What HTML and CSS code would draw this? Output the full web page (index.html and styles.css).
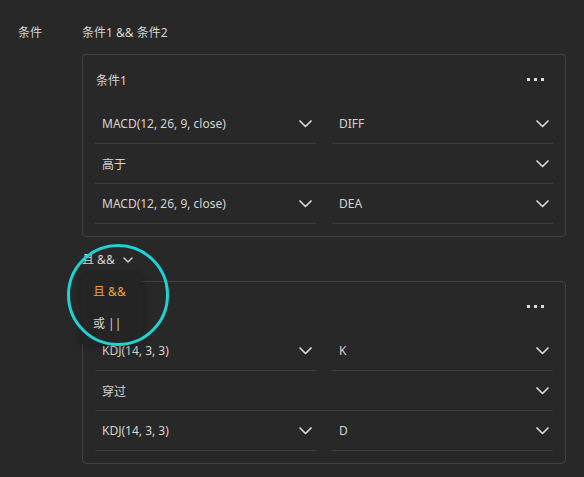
FILE: index.html
```html
<!DOCTYPE html>
<html lang="zh-CN">
<head>
<meta charset="utf-8">
<link rel="stylesheet" href="styles.css">
</head>
<body>
<div class="form-row">
  <div class="label">条件</div>
  <div class="content">
    <div class="summary">条件1 &amp;&amp; 条件2</div>

    <div class="card">
      <div class="card-head">
        <span>条件1</span>
        <svg class="more" width="18" height="4" viewBox="0 0 18 4"><rect x="0" y="0" width="3" height="3"/><rect x="7" y="0" width="3" height="3"/><rect x="14" y="0" width="3" height="3"/></svg>
      </div>
      <div class="row">
        <div class="select"><span>MACD(12, 26, 9, close)</span><svg class="chev" width="13" height="8" viewBox="0 0 13 8"><polyline points="1,1 6.5,6.5 12,1"/></svg></div>
        <div class="select"><span>DIFF</span><svg class="chev" width="13" height="8" viewBox="0 0 13 8"><polyline points="1,1 6.5,6.5 12,1"/></svg></div>
      </div>
      <div class="row single">
        <div class="select"><span>高于</span><svg class="chev" width="13" height="8" viewBox="0 0 13 8"><polyline points="1,1 6.5,6.5 12,1"/></svg></div>
      </div>
      <div class="row">
        <div class="select"><span>MACD(12, 26, 9, close)</span><svg class="chev" width="13" height="8" viewBox="0 0 13 8"><polyline points="1,1 6.5,6.5 12,1"/></svg></div>
        <div class="select"><span>DEA</span><svg class="chev" width="13" height="8" viewBox="0 0 13 8"><polyline points="1,1 6.5,6.5 12,1"/></svg></div>
      </div>
    </div>

    <div class="logic">
      <div class="logic-trigger">且 &amp;&amp;<svg class="chev-sm" width="10" height="6" viewBox="0 0 10 6"><polyline points="1,1 5,5 9,1"/></svg></div>
      <div class="menu">
        <div class="menu-item active">且 &amp;&amp;</div>
        <div class="menu-item">或 ||</div>
      </div>
    </div>

    <div class="card">
      <div class="card-head">
        <span class="covered">条件2</span>
        <svg class="more" width="18" height="4" viewBox="0 0 18 4"><rect x="0" y="0" width="3" height="3"/><rect x="7" y="0" width="3" height="3"/><rect x="14" y="0" width="3" height="3"/></svg>
      </div>
      <div class="row">
        <div class="select"><span>KDJ(14, 3, 3)</span><svg class="chev" width="13" height="8" viewBox="0 0 13 8"><polyline points="1,1 6.5,6.5 12,1"/></svg></div>
        <div class="select"><span>K</span><svg class="chev" width="13" height="8" viewBox="0 0 13 8"><polyline points="1,1 6.5,6.5 12,1"/></svg></div>
      </div>
      <div class="row single">
        <div class="select"><span>穿过</span><svg class="chev" width="13" height="8" viewBox="0 0 13 8"><polyline points="1,1 6.5,6.5 12,1"/></svg></div>
      </div>
      <div class="row">
        <div class="select"><span>KDJ(14, 3, 3)</span><svg class="chev" width="13" height="8" viewBox="0 0 13 8"><polyline points="1,1 6.5,6.5 12,1"/></svg></div>
        <div class="select"><span>D</span><svg class="chev" width="13" height="8" viewBox="0 0 13 8"><polyline points="1,1 6.5,6.5 12,1"/></svg></div>
      </div>
    </div>
  </div>
</div>
<div class="highlight"></div>
</body>
</html>
```

FILE: styles.css
```css
html, body {
  margin: 0;
  padding: 0;
  background: #282828;
  height: 100%;
}
body {
  font-family: "Noto Sans", "Noto Sans CJK SC", sans-serif;
  font-size: 12px;
  color: #d4d4d4;
  position: relative;
  overflow: hidden;
}
.form-row {
  display: grid;
  grid-template-columns: 64px 1fr;
  padding: 24px 18px 0 18px;
}
.label, .summary {
  line-height: 18px;
  height: 18px;
}
.card {
  border: 1px solid #414141;
  border-radius: 4px;
  padding: 12px;
}
.summary + .card {
  margin-top: 12px;
}
.card-head {
  height: 25px;
  display: flex;
  align-items: center;
  justify-content: space-between;
  padding-left: 1px;
}
.covered {
  visibility: hidden;
}
.more {
  fill: #dcdcdc;
  margin-right: 8px;
}
.row {
  display: grid;
  grid-template-columns: 1fr 1fr;
  column-gap: 16px;
}
.card-head + .row {
  margin-top: 12px;
}
.row.single {
  grid-template-columns: 1fr;
}
.select {
  height: 40px;
  box-sizing: border-box;
  border-bottom: 1px solid #3c3c3c;
  display: flex;
  align-items: center;
  justify-content: space-between;
  padding: 0 4px 0 7px;
}
.chev {
  fill: none;
  stroke: #d8d8d8;
  stroke-width: 1.7;
  stroke-linecap: round;
  stroke-linejoin: round;
}
.logic {
  position: relative;
  margin: 12px 0 11px;
}
.logic-trigger {
  display: flex;
  align-items: center;
  gap: 8px;
  height: 21px;
  line-height: 21px;
}
.chev-sm {
  fill: none;
  stroke: #cfcfcf;
  stroke-width: 1.5;
  stroke-linecap: round;
  stroke-linejoin: round;
}
.menu {
  position: absolute;
  left: 0;
  top: 23px;
  width: 60px;
  padding: 4px 0;
  background: #242424;
  box-shadow: 0 2px 8px rgba(0, 0, 0, 0.35);
  z-index: 2;
}
.menu-item {
  height: 32px;
  line-height: 32px;
  padding-left: 11px;
  color: #d4d4d4;
}
.menu-item.active {
  color: #eda338;
}
.highlight {
  position: absolute;
  left: 67px;
  top: 244px;
  width: 102px;
  height: 102px;
  box-sizing: border-box;
  border: 3px solid #1fd3d3;
  border-radius: 50%;
  z-index: 3;
  pointer-events: none;
}
```
